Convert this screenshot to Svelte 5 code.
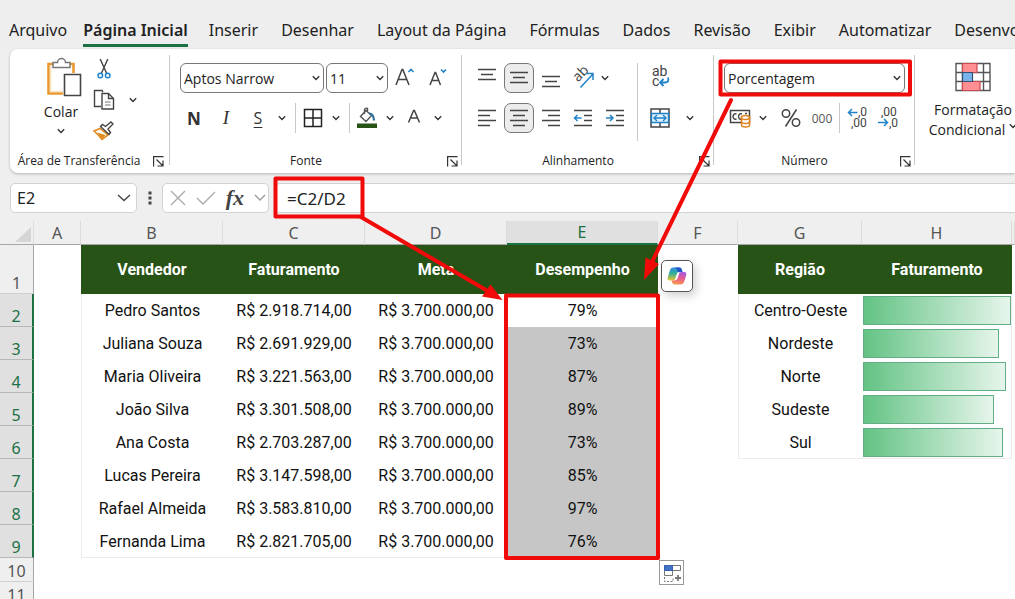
<script>
  const tabs = ['Arquivo', 'Página Inicial', 'Inserir', 'Desenhar', 'Layout da Página', 'Fórmulas', 'Dados', 'Revisão', 'Exibir', 'Automatizar', 'Desenvolvedor'];
  const columns = ['A', 'B', 'C', 'D', 'E', 'F', 'G', 'H', ''];
  const sellers = [
    ['Pedro Santos', '2.918.714,00', '79%'],
    ['Juliana Souza', '2.691.929,00', '73%'],
    ['Maria Oliveira', '3.221.563,00', '87%'],
    ['João Silva', '3.301.508,00', '89%'],
    ['Ana Costa', '2.703.287,00', '73%'],
    ['Lucas Pereira', '3.147.598,00', '85%'],
    ['Rafael Almeida', '3.583.810,00', '97%'],
    ['Fernanda Lima', '2.821.705,00', '76%']
  ];
  const regions = [
    ['Centro-Oeste', 99],
    ['Nordeste', 91],
    ['Norte', 96],
    ['Sudeste', 88],
    ['Sul', 94]
  ];
</script>

{#snippet chevron()}
  <svg class="chev" width="8" height="6" viewBox="0 0 8 6" aria-hidden="true"><path d="M.8 1.2 4 4.4 7.2 1.2" fill="none" stroke="#333" stroke-width="1.4" /></svg>
{/snippet}

{#snippet launcher(name)}
  <button class="launch" aria-label={name}>
    <svg width="11" height="11" viewBox="0 0 11 11"><path d="M.6 10.5V.6h9.9M3.5 3.5l6 6M10 4.5V10H4.5" fill="none" stroke="#333" stroke-width="1.2" /></svg>
  </button>
{/snippet}

{#snippet lines(rows)}
  <svg width="20" height="20" viewBox="0 0 20 20" aria-hidden="true">
    {#each rows as [x, y, w]}
      <path d="M{x} {y}.5h{w}" stroke="#444" stroke-width="1.4" />
    {/each}
  </svg>
{/snippet}

{#snippet indent(out)}
  <svg width="20" height="20" viewBox="0 0 20 20" aria-hidden="true">
    <path d="M1 2.5h18M11 7.5h8M11 12.5h8M1 17.5h18" stroke="#444" stroke-width="1.4" />
    <path d={out ? 'M8.500 10H1.500M4.500 7l-3 3 3 3' : 'M1 10h7M5 7l3 3-3 3'} fill="none" stroke="#2083c9" stroke-width="1.5" />
  </svg>
{/snippet}

<div class="app">
  <nav class="tabs" aria-label="Guias">
    {#each tabs as tab, i}
      <button class="tab" class:active={i === 1}>{tab}</button>
    {/each}
  </nav>

  <div class="ribbon">
    <section class="group clip">
      <div class="body clipbody">
        <button class="big">
          <svg class="paste" width="36" height="40" viewBox="0 0 36 40">
            <path d="M9 6H2.500v29.500H17M22 6h5.500v9" fill="none" stroke="#e8992f" stroke-width="2.600" />
            <path d="M4.600 8v25.500H17" fill="none" stroke="#fbe3bd" stroke-width="1.600" />
            <path d="M7 9.500V4.500h4.500a4 4 0 0 1 8 0H24v5z" fill="#fff" stroke="#777" stroke-width="1.500" />
            <path d="M18.500 16.500h16v21h-16z" fill="#fff" stroke="#444" stroke-width="1.600" />
          </svg>
          <span>Colar</span>
          {@render chevron()}
        </button>
        <div class="stack">
          <button class="ico" aria-label="Recortar">
            <svg width="14" height="22" viewBox="0 0 14 22">
              <path d="M3.200 1 9.700 15.500M10.800 1 4.300 15.500" fill="none" stroke="#444" stroke-width="1.400" />
              <circle cx="3.300" cy="17.500" r="2.300" fill="#fff" stroke="#2083c9" stroke-width="1.500" />
              <circle cx="10.700" cy="17.500" r="2.300" fill="#fff" stroke="#2083c9" stroke-width="1.500" />
            </svg>
          </button>
          <div class="pair">
            <button class="ico" aria-label="Copiar">
              <svg width="22" height="22" viewBox="0 0 22 22">
                <path d="M8 17.500H1.500v-16h7.500l1 1.500" fill="none" stroke="#444" stroke-width="1.400" />
                <path d="M9 4.500h6.500l5 5v10.500H9zM15.500 4.500v5h5" fill="#fff" stroke="#444" stroke-width="1.400" />
                <path d="M12 13h5.500M12 16h5.500" stroke="#777" />
              </svg>
            </button>
            <button class="drop" aria-label="Opções de copiar">{@render chevron()}</button>
          </div>
          <button class="ico" aria-label="Pincel de formatação">
            <svg width="22" height="20" viewBox="0 0 22 20">
              <path d="m7 7.500-6 2.500q5 4.500 8 8.500l6-4.500z" fill="#fff" stroke="#e08a1e" stroke-width="1.600" />
              <path d="M4 11.500 12.500 14 9 18z" fill="#e08a1e" />
              <path d="m7.500 5.500 8.500 8 1.500-2-2.500-3.500 5-5-2-2-5.500 4.500L9.500 3.500z" fill="#fff" stroke="#444" stroke-width="1.400" />
            </svg>
          </button>
        </div>
      </div>
      <div class="label"><span>Área de Transferência</span>{@render launcher('Opções da Área de Transferência')}</div>
    </section>

    <section class="group font">
      <div class="body">
        <div class="row">
          <span class="pick family">
            <select aria-label="Fonte"><option>Aptos Narrow</option></select>{@render chevron()}
          </span>
          <span class="pick size">
            <select aria-label="Tamanho da fonte"><option>11</option></select>{@render chevron()}
          </span>
          <button class="cell32 grow" aria-label="Aumentar fonte">
            <svg width="22" height="22" viewBox="0 0 22 22"><path d="M2 18 8 2.500h.8L15 18M4.200 12.500h8.600" fill="none" stroke="#444" stroke-width="1.500" /><path d="m14.500 5 2.500-2.500L19.500 5" fill="none" stroke="#2083c9" stroke-width="1.600" /></svg>
          </button>
          <button class="cell32" aria-label="Diminuir fonte">
            <svg width="22" height="22" viewBox="0 0 22 22"><path d="M4 18 9 5.500h.600L14.500 18M6 13.500h6.500" fill="none" stroke="#444" stroke-width="1.500" /><path d="m15 2.500 2.500 2.500L20 2.500" fill="none" stroke="#2083c9" stroke-width="1.600" /></svg>
          </button>
        </div>
        <div class="row second">
          <button class="cell32 glyph bold">N</button>
          <button class="cell32 glyph italic">I</button>
          <button class="cell32 glyph under">S</button>
          <button class="drop" aria-label="Opções de sublinhado">{@render chevron()}</button>
          <i class="sep"></i>
          <button class="cell24" aria-label="Bordas">
            <svg width="20" height="20" viewBox="0 0 20 20"><path d="M1.500 1.500h17v17h-17zM10 1.500v17M1.500 10h17" fill="none" stroke="#222" stroke-width="1.500" /></svg>
          </button>
          <button class="drop" aria-label="Opções de bordas">{@render chevron()}</button>
          <i class="sep"></i>
          <button class="cell24" aria-label="Cor de preenchimento">
            <svg width="20" height="22" viewBox="0 0 20 22">
              <path d="M9 3.500 3.500 9.500l5.500 5 5.500-6zM10.500 5.500V1.500q-2-1-3 1v4.500" fill="none" stroke="#555" stroke-width="1.400" />
              <path d="M12 6.500q4.500 0 5 7" fill="none" stroke="#2c6f9f" stroke-width="2.200" />
              <path d="M0 16.500h20V21H0z" fill="#275317" />
            </svg>
          </button>
          <button class="drop" aria-label="Opções de preenchimento">{@render chevron()}</button>
          <button class="cell32" aria-label="Cor da fonte">
            <svg width="16" height="20" viewBox="0 0 16 20"><path d="M2.500 14.500 7.600 2.500h.8l5.100 12M4.500 10h7" fill="none" stroke="#444" stroke-width="1.500" /></svg>
          </button>
          <button class="drop" aria-label="Opções de cor da fonte">{@render chevron()}</button>
        </div>
      </div>
      <div class="label"><span>Fonte</span>{@render launcher('Opções de fonte')}</div>
    </section>

    <section class="group align">
      <div class="body split">
        <div class="pad">
          <div class="row">
            <button class="cell30" aria-label="Alinhar em cima">{@render lines([[1, 1, 18], [4, 6, 12], [1, 11, 18]])}</button>
            <button class="cell30 on" aria-label="Alinhar no meio">{@render lines([[1, 4, 18], [4, 9, 12], [1, 14, 18]])}</button>
            <button class="cell30" aria-label="Alinhar embaixo">{@render lines([[1, 8, 18], [4, 13, 12], [1, 18, 18]])}</button>
            <button class="cell30" aria-label="Orientação">
              <svg width="24" height="22" viewBox="0 0 24 22"><text x="0" y="0" transform="translate(7 15.500) rotate(-45)" font-size="14" fill="#444">ab</text><path d="M9.500 20.500 21.500 7.500M15.500 6.500h6.500v6.500" fill="none" stroke="#2083c9" stroke-width="1.500" /></svg>
            </button>
            <button class="drop" aria-label="Opções de orientação">{@render chevron()}</button>
          </div>
          <div class="row second">
            <button class="cell30" aria-label="Alinhar à esquerda">{@render lines([[1, 2, 18], [1, 7, 12], [1, 12, 18], [1, 17, 12]])}</button>
            <button class="cell30 on" aria-label="Centralizar">{@render lines([[1, 2, 18], [4, 7, 12], [1, 12, 18], [4, 17, 12]])}</button>
            <button class="cell30" aria-label="Alinhar à direita">{@render lines([[1, 2, 18], [7, 7, 12], [1, 12, 18], [7, 17, 12]])}</button>
            <button class="cell30" aria-label="Diminuir recuo">{@render indent(true)}</button>
            <button class="cell30" aria-label="Aumentar recuo">{@render indent(false)}</button>
          </div>
        </div>
        <i class="tall"></i>
        <div class="merge">
          <button class="cell30" aria-label="Quebrar texto automaticamente">
            <svg width="20" height="22" viewBox="0 0 20 22"><g font-family="Roboto, sans-serif" font-size="14" fill="#444"><text x="2" y="9">ab</text><text x="2" y="19">c</text></g><path d="M18 10.500q1.500 5-3 5h-5M13.500 12 10 15.500l3.500 3.500" fill="none" stroke="#2083c9" stroke-width="1.800" /></svg>
          </button>
          <div class="row second">
            <button class="cell30" aria-label="Mesclar e centralizar">
              <svg width="20" height="20" viewBox="0 0 20 20"><path d="M1 1h18v18H1zM10 1v4.500M10 14.500V19" fill="none" stroke="#444" stroke-width="1.500" /><path d="M1.500 5.500h17v9h-17z" fill="#e3f1fb" stroke="#2083c9" stroke-width="1.400" /><path d="M4 10h12M7 7l-3 3 3 3M13 7l3 3-3 3" fill="none" stroke="#2083c9" stroke-width="1.400" /></svg>
            </button>
            <button class="drop wide" aria-label="Opções de mesclagem">{@render chevron()}</button>
          </div>
        </div>
      </div>
      <div class="label"><span>Alinhamento</span>{@render launcher('Opções de alinhamento')}</div>
    </section>

    <section class="group number">
      <div class="body">
        <div class="row">
          <span class="pick format">
            <select aria-label="Formato de número"><option>Porcentagem</option></select>{@render chevron()}
          </span>
        </div>
        <div class="row second">
          <button class="cell30" aria-label="Formato de contabilização">
            <svg width="22" height="20" viewBox="0 0 22 20"><path d="M1.500 2.500h19v12h-19z" fill="#fff" stroke="#444" stroke-width="1.500" /><path d="M7.500 6q-3-1-3.500 2.500.5 3.500 3.500 2.500M13 6q-3-1-3.500 2.500.5 3.500 2.500 2.500M16 5.500h2" fill="none" stroke="#444" stroke-width="1.400" /><path d="M12.500 9v8q0 2 4 2t4-2V9z" fill="#fff" stroke="#e07f1c" stroke-width="1.500" /><ellipse cx="16.500" cy="9.500" rx="4" ry="2" fill="#fff" stroke="#e07f1c" stroke-width="1.500" /><path d="M12.500 13.500q0 2 4 2t4-2" fill="none" stroke="#e07f1c" stroke-width="1.500" /></svg>
          </button>
          <button class="drop" aria-label="Opções de moeda">{@render chevron()}</button>
          <button class="percent" aria-label="Porcentagem">
            <svg width="20" height="20" viewBox="0 0 20 20"><path d="M15.500 1.500 4.500 18.500" stroke="#444" stroke-width="1.500" /><circle cx="5" cy="5.500" r="3.700" fill="none" stroke="#444" stroke-width="1.500" /><circle cx="15" cy="14.500" r="3.700" fill="none" stroke="#444" stroke-width="1.500" /></svg>
          </button>
          <button class="cell24 zeros">000</button>
          <i class="sep"></i>
          <button class="cell30" aria-label="Aumentar casas decimais">
            <svg width="22" height="22" viewBox="0 0 22 22"><g font-family="Roboto, sans-serif" font-size="12" fill="#444"><text x="11" y="9">,0</text><text x="4" y="20">,00</text></g><path d="M10.500 5.500h-9M5 2 1.500 5.500 5 9" fill="none" stroke="#2083c9" stroke-width="1.500" /></svg>
          </button>
          <button class="cell30" aria-label="Diminuir casas decimais">
            <svg width="22" height="22" viewBox="0 0 22 22"><g font-family="Roboto, sans-serif" font-size="12" fill="#444"><text x="4" y="9">,00</text><text x="12" y="20">,0</text></g><path d="M1 15.500h9.500M7 12l3.500 3.500L7 19" fill="none" stroke="#2083c9" stroke-width="1.500" /></svg>
          </button>
        </div>
      </div>
      <div class="label"><span>Número</span>{@render launcher('Opções de número')}</div>
    </section>

    <section class="group styles">
      <button class="cond">
        <svg width="36" height="30" viewBox="0 0 36 30">
          <path d="M1 1.500h34v27H1zM1 10.500h34M1 19.500h34M7.500 1.500v27M28.500 1.500v27" fill="#fff" stroke="#555" stroke-width="1.400" />
          <path d="M7.500 1.500H22v9H7.500zM7.500 19.500h17.500v9H7.500z" fill="#ff8f93" stroke="#c94b50" stroke-width="1.200" />
          <path d="M7.500 10.500h10v9h-10z" fill="#77b3ea" stroke="#33506e" stroke-width="1.200" />
        </svg>
        <span>Formatação</span>
        <span class="last">Condicional {@render chevron()}</span>
      </button>
    </section>
  </div>

  <div class="formula">
    <div class="name">
      <input class="ref" aria-label="Caixa de nome" value="E2" />
      <svg width="14" height="8" viewBox="0 0 14 8" aria-hidden="true"><path d="m1 1 6 5.500L13 1" fill="none" stroke="#444" stroke-width="1.400" /></svg>
    </div>
    <svg class="dots" width="4" height="14" viewBox="0 0 4 14" aria-hidden="true"><path d="M.500.500h3v3h-3zM.500 5.500h3v3h-3zM.500 10.500h3v3h-3z" fill="#444" /></svg>
    <div class="tools">
      <button aria-label="Cancelar"><svg width="16" height="16" viewBox="0 0 16 16"><path d="m1 1 14 14M15 1 1 15" stroke="#aaa" stroke-width="1.400" /></svg></button>
      <button aria-label="Inserir"><svg width="20" height="14" viewBox="0 0 20 14"><path d="m1 7 6 6L19 1" fill="none" stroke="#aaa" stroke-width="1.400" /></svg></button>
      <button class="fx">fx</button>
      <button aria-label="Funções"><svg width="12" height="8" viewBox="0 0 12 8"><path d="m1 1 5 5 5-5" fill="none" stroke="#999" stroke-width="1.300" /></svg></button>
    </div>
    <input class="entry" aria-label="Barra de fórmulas" value="=C2/D2" />
  </div>

  <table>
    <colgroup>
      <col class="c-h" /><col class="c-a" /><col class="c-b" /><col class="c-b" /><col class="c-b" /><col class="c-e" /><col class="c-f" /><col class="c-g" /><col class="c-i" /><col />
    </colgroup>
    <thead>
      <tr>
        <td class="corner"><svg width="16" height="16" viewBox="0 0 16 16" aria-hidden="true"><path d="M16 0v15H0z" fill="#d5d5d5" /></svg></td>
        {#each columns as c}<th scope="col" class:sel={c === 'E'}>{c}</th>{/each}
      </tr>
    </thead>
    <tbody>
      <tr class="head">
        <th scope="row">1</th>
        <td></td>
        <td class="g">Vendedor</td><td class="g">Faturamento</td><td class="g">Meta</td><td class="g">Desempenho</td>
        <td class="host">
          <button class="copilot" aria-label="Copilot">
            <svg width="20" height="18" viewBox="0 0 20 18">
              <defs>
                <linearGradient id="ca" x1="0" y1="0" x2="0" y2="1"><stop offset="0" stop-color="#2f8fe0" /><stop offset=".45" stop-color="#2fae9a" /><stop offset="1" stop-color="#f0c52e" /></linearGradient>
                <linearGradient id="cb" x1="0.600" y1="0" x2="0.400" y2="1"><stop offset="0" stop-color="#a45be0" /><stop offset=".5" stop-color="#ea5a8c" /><stop offset="1" stop-color="#f79a4c" /></linearGradient>
              </defs>
              <path d="M6.500.5h6q1.700 0 2.300 2l.7 2.500h-2.800q-2 0-2.600 2L8.500 11.500q-.7 2-2.500 2H2.800Q.1 13.500.8 10.300l2-6.800Q3.600.500 6.500.500z" fill="url(#ca)" />
              <path d="M12.500.5q1.700 0 2.300 2l.7 2.500h-2.800q-1.200 0-1.800.8L9.800 2.500Q9.200.500 7.500.500z" fill="#2455c8" />
              <path d="M13.500 17.500h-6q-1.700 0-2.300-2L4.500 13.500H7q2 0 2.600-2l1.900-5q.6-1.500 2.500-1.500h3.200q2.700 0 2 3.200l-2 6.300q-.8 3-3.700 3z" fill="url(#cb)" />
              <path d="M9 12.500 11.500 5.500" stroke="#fff" stroke-width="2" />
            </svg>
          </button>
        </td>
        <td class="g">Região</td><td class="g">Faturamento</td><td></td>
      </tr>
      {#each sellers as [name, value, pct], i}
        <tr class="data">
          <th scope="row" class="sel">{i + 2}</th>
          <td></td>
          <td class="edge-l" class:edge-b={i === 7}>{name}</td>
          <td class:edge-b={i === 7}>R$ {value}</td>
          <td class:edge-b={i === 7}>R$ 3.700.000,00</td>
          <td class:shade={i > 0}>{pct}</td>
          <td></td>
          {#if i < 5}
            <td class="edge-l" class:edge-b={i === 4}>{regions[i][0]}</td>
            <td class="barcell edge-r" class:edge-b={i === 4}><div class="bar" style:width="{regions[i][1]}%"></div></td>
          {:else}
            <td></td><td></td>
          {/if}
          <td></td>
        </tr>
      {/each}
      <tr class="plain">
        <th scope="row">10</th><td></td><td></td><td></td><td></td><td></td>
        <td class="host">
          <button class="fill" aria-label="Opções de AutoPreenchimento">
            <svg width="18" height="18" viewBox="0 0 18 18"><path d="M1.500 1.500h16v5h-16zM1.500 6.500h8v5h-8z" fill="#fff" stroke="#777" /><path d="M1.500 1.500h8v5h-8z" fill="#4472c4" stroke="#3560b0" /><path d="M1.500 13v4.500H10V13" fill="none" stroke="#777" stroke-dasharray="2 1.500" /><path d="M15 11v6M12 14h6" stroke="#777" stroke-width="1.800" /></svg>
          </button>
        </td>
        <td></td><td></td><td></td>
      </tr>
      <tr class="plain"><th scope="row">11</th><td></td><td></td><td></td><td></td><td></td><td></td><td></td><td></td><td></td></tr>
    </tbody>
  </table>

  <svg class="marks" width="1015" height="599" viewBox="0 0 1015 599" aria-hidden="true">
    <g fill="none" stroke="#f00a0a" stroke-width="4" stroke-linejoin="round">
      <rect x="720.500" y="61.500" width="189.500" height="33" />
      <rect x="275.500" y="178.500" width="87" height="38" />
      <rect x="506" y="295.500" width="152" height="262.500" />
      <path d="M361 217 486 290M731 100 652 262" stroke-linecap="round" />
    </g>
    <path d="M502.500 300 482 296.500 490.500 284.500zM644 280 645.500 257.500 659 264z" fill="#f00a0a" />
  </svg>
</div>

<style>
  :global(body) { overflow: hidden; background: #fff; }
  .app { position: relative; height: 100vh; overflow: hidden; font-family: "Open Sans", "Noto Sans", sans-serif; color: #222; background: #efefef; }
  button { border: 0; padding: 0; margin: 0; background: none; font: inherit; color: inherit; display: flex; align-items: center; justify-content: center; flex: none; }
  svg { display: block; flex: none; overflow: visible; }

  .tabs { display: flex; gap: 23px; height: 49px; box-sizing: border-box; padding: 15px 0 2px 9px; background: #eee; }
  .tab { font-family: "Noto Sans", sans-serif; font-size: 16px; line-height: 24px; white-space: nowrap; align-items: center; border-bottom: 3px solid transparent; }
  .tab.active { font-weight: 600; border-color: #1b7044; margin: 0 -2px 0 -7px; }

  .ribbon { display: flex; height: 124px; margin-left: 10px; background: #fff; border-radius: 8px 0 0 8px; box-shadow: 0 1px 3px rgba(0, 0, 0, .25); overflow: hidden; }
  .group { flex: none; box-sizing: border-box; display: flex; flex-direction: column; font-size: 14px; }
  .group:not(.styles) { background: linear-gradient(#c8c8c8, #c8c8c8) right 0 top 6px / 1px 110px no-repeat; }
  .clip { width: 160px; }
  .font { width: 292px; padding-left: 8px; }
  .align { width: 252px; }
  .number { width: 201px; }
  .styles { flex: 1 0 100px; }
  .body { height: 100px; box-sizing: border-box; padding-top: 14px; }
  .label { display: grid; grid-template-columns: 1fr 20px; align-items: center; font-size: 12px; line-height: 22px; white-space: nowrap; }
  .label span { justify-self: center; }
  .font .label { margin-left: -8px; }
  .clip .label { padding-right: 2px; }
  .launch { width: 20px; height: 24px; }
  .row { display: flex; align-items: center; height: 30px; }
  .second { margin-top: 10px; }
  .cell32 { width: 32px; height: 30px; }
  .cell30 { width: 30px; height: 30px; box-sizing: border-box; }
  .cell24 { width: 24px; height: 30px; }
  .drop { width: 16px; height: 30px; }
  .on { border: 1px solid #777; border-radius: 7px; background: #ececec; }
  .sep { width: 1px; height: 30px; background: #c8c8c8; margin: 0 5px; }

  .clipbody { display: flex; padding: 9px 0 0 30px; }
  .big { flex-direction: column; width: 42px; justify-content: flex-start; align-self: flex-start; font-size: 14px; line-height: 24px; }
  .paste { margin: 0 0 2px 6px; }
  .big .chev { margin-top: 4px; }
  .stack { display: flex; flex-direction: column; gap: 9px; margin-left: 11px; align-items: flex-start; }
  .stack .ico { width: 22px; height: 22px; }
  .pair { display: flex; gap: 10px; align-items: center; }
  .pair .drop { height: 22px; }

  .pick { display: grid; align-items: center; height: 30px; }
  .pick > :global(*) { grid-area: 1 / 1; }
  .pick .chev { justify-self: end; margin-right: 4px; pointer-events: none; }
  select { appearance: none; width: 100%; height: 30px; box-sizing: border-box; border: 1px solid #777; border-radius: 6px; background: #fff; padding: 0 3px; font: 14px "Open Sans", sans-serif; color: #222; }
  .family { width: 144px; margin-left: 2px; }
  .size { width: 62px; margin-left: 2px; }
  .grow { margin-left: 1px; }
  .format { width: 181px; margin-left: 10px; }
  .glyph { font-size: 17px; color: #333; }
  .bold { font-weight: 700; }
  .italic { font-family: "Liberation Serif", serif; font-style: italic; font-size: 19px; }
  .under { text-decoration: underline; text-underline-offset: 3px; font-size: 16px; }
  .cell24 + .drop { margin-left: 3px; }

  .split { display: flex; }
  .pad { width: 165px; padding-left: 10px; }
  .pad .row { gap: 2px; }
  .pad .drop { margin-left: -3px; }
  .tall { width: 1px; height: 78px; background: #c8c8c8; }
  .merge { padding-left: 7px; }
  .wide { width: 30px; }
  .number .second { padding-left: 11px; }
  .number .sep { margin: 0 3px; }
  .percent { width: 34px; height: 30px; margin-left: 3px; }
  .zeros { font: 12px "Open Sans", sans-serif; color: #555; margin: 0 2px; }

  .cond { flex-direction: column; align-self: flex-start; margin: 13px 0 0 10px; width: 96px; font-size: 14px; line-height: 20px; }
  .cond svg:first-child { margin-bottom: 8px; }
  .last { display: flex; align-items: center; gap: 4px; }

  .formula { display: flex; align-items: center; margin: 10px 0 8px 10px; height: 30px; }
  .name { width: 127px; height: 30px; box-sizing: border-box; display: flex; align-items: center; background: #fff; border: 1px solid #d2d2d2; border-radius: 5px; padding: 0 5px 0 6px; }
  input { border: 0; outline: 0; min-width: 0; flex: 1; background: none; padding: 0; font: 16px "Noto Sans", sans-serif; color: #222; }
  .dots { margin: 0 10px 0 11px; }
  .tools { width: 107px; height: 30px; box-sizing: border-box; display: flex; align-items: center; justify-content: space-between; padding: 0 2px 0 7px; background: #fff; border: 1px solid #d2d2d2; border-radius: 5px; }
  .fx { font: italic 700 22px "Liberation Serif", serif; color: #444; }
  .formula .entry { height: 30px; box-sizing: border-box; margin-left: 6px; padding-left: 11px; background: #fff; border: 1px solid #d2d2d2; border-right: 0; border-radius: 5px 0 0 5px; font-size: 17px; }

  table { width: 100%; table-layout: fixed; border-collapse: separate; border-spacing: 0; background: #fff; }
  .c-h { width: 34px; }
  .c-a { width: 47px; }
  .c-b { width: 142px; }
  .c-e { width: 151px; }
  .c-f { width: 80px; }
  .c-g { width: 124px; }
  .c-i { width: 150px; }
  th, td { padding: 0; box-sizing: border-box; text-align: center; white-space: nowrap; }
  td { font: 16px "Roboto", sans-serif; color: #111; }
  thead th, .corner { height: 24px; background: #efefef; border-bottom: 1px solid #a6a6a6; border-right: 1px solid #dcdcdc; font: 16px "Noto Sans", sans-serif; color: #555; line-height: 22px; }
  thead th.sel { background: #e0e0e0; color: #1b7044; border-bottom: 2px solid #1b7044; }
  .corner svg { margin: 4px 0 0 15px; }
  tbody th { background: #efefef; border-right: 1px solid #a6a6a6; border-bottom: 1px solid #d0d0d0; vertical-align: bottom; font: 16px "Noto Sans", sans-serif; line-height: 20px; color: #555; }
  tbody th.sel { background: #e0e0e0; color: #1b7044; border-right: 2px solid #1b7044; border-bottom-color: #b8b8b8; }
  .head > * { height: 49px; }
  .data > * { height: 33px; }
  .plain > * { height: 24px; }
  .g { background: #275317; color: #fff; font-weight: 700; }
  .edge-l { border-left: 1px solid #ececec; }
  .edge-r { border-right: 1px solid #ececec; }
  .edge-b { border-bottom: 1px solid #ececec; }
  .shade { background: #c6c6c6; }
  .bar { height: 29px; box-sizing: border-box; margin-left: 1px; border: 1px solid #63ae84; background: linear-gradient(90deg, #63c384, #e6f5eb); }
  .host { position: relative; }
  .copilot { position: absolute; left: 3px; top: 15px; width: 32px; height: 32px; box-sizing: border-box; background: #fff; border: 1px solid #555; border-radius: 5px; box-shadow: 3px 4px 10px rgba(0, 0, 0, .18); }
  .fill { position: absolute; left: 1px; top: 2px; width: 25px; height: 25px; box-sizing: border-box; border: 1px solid #999; background: #fff; z-index: 1; }
  .marks { position: absolute; left: 0; top: 0; pointer-events: none; }
</style>
